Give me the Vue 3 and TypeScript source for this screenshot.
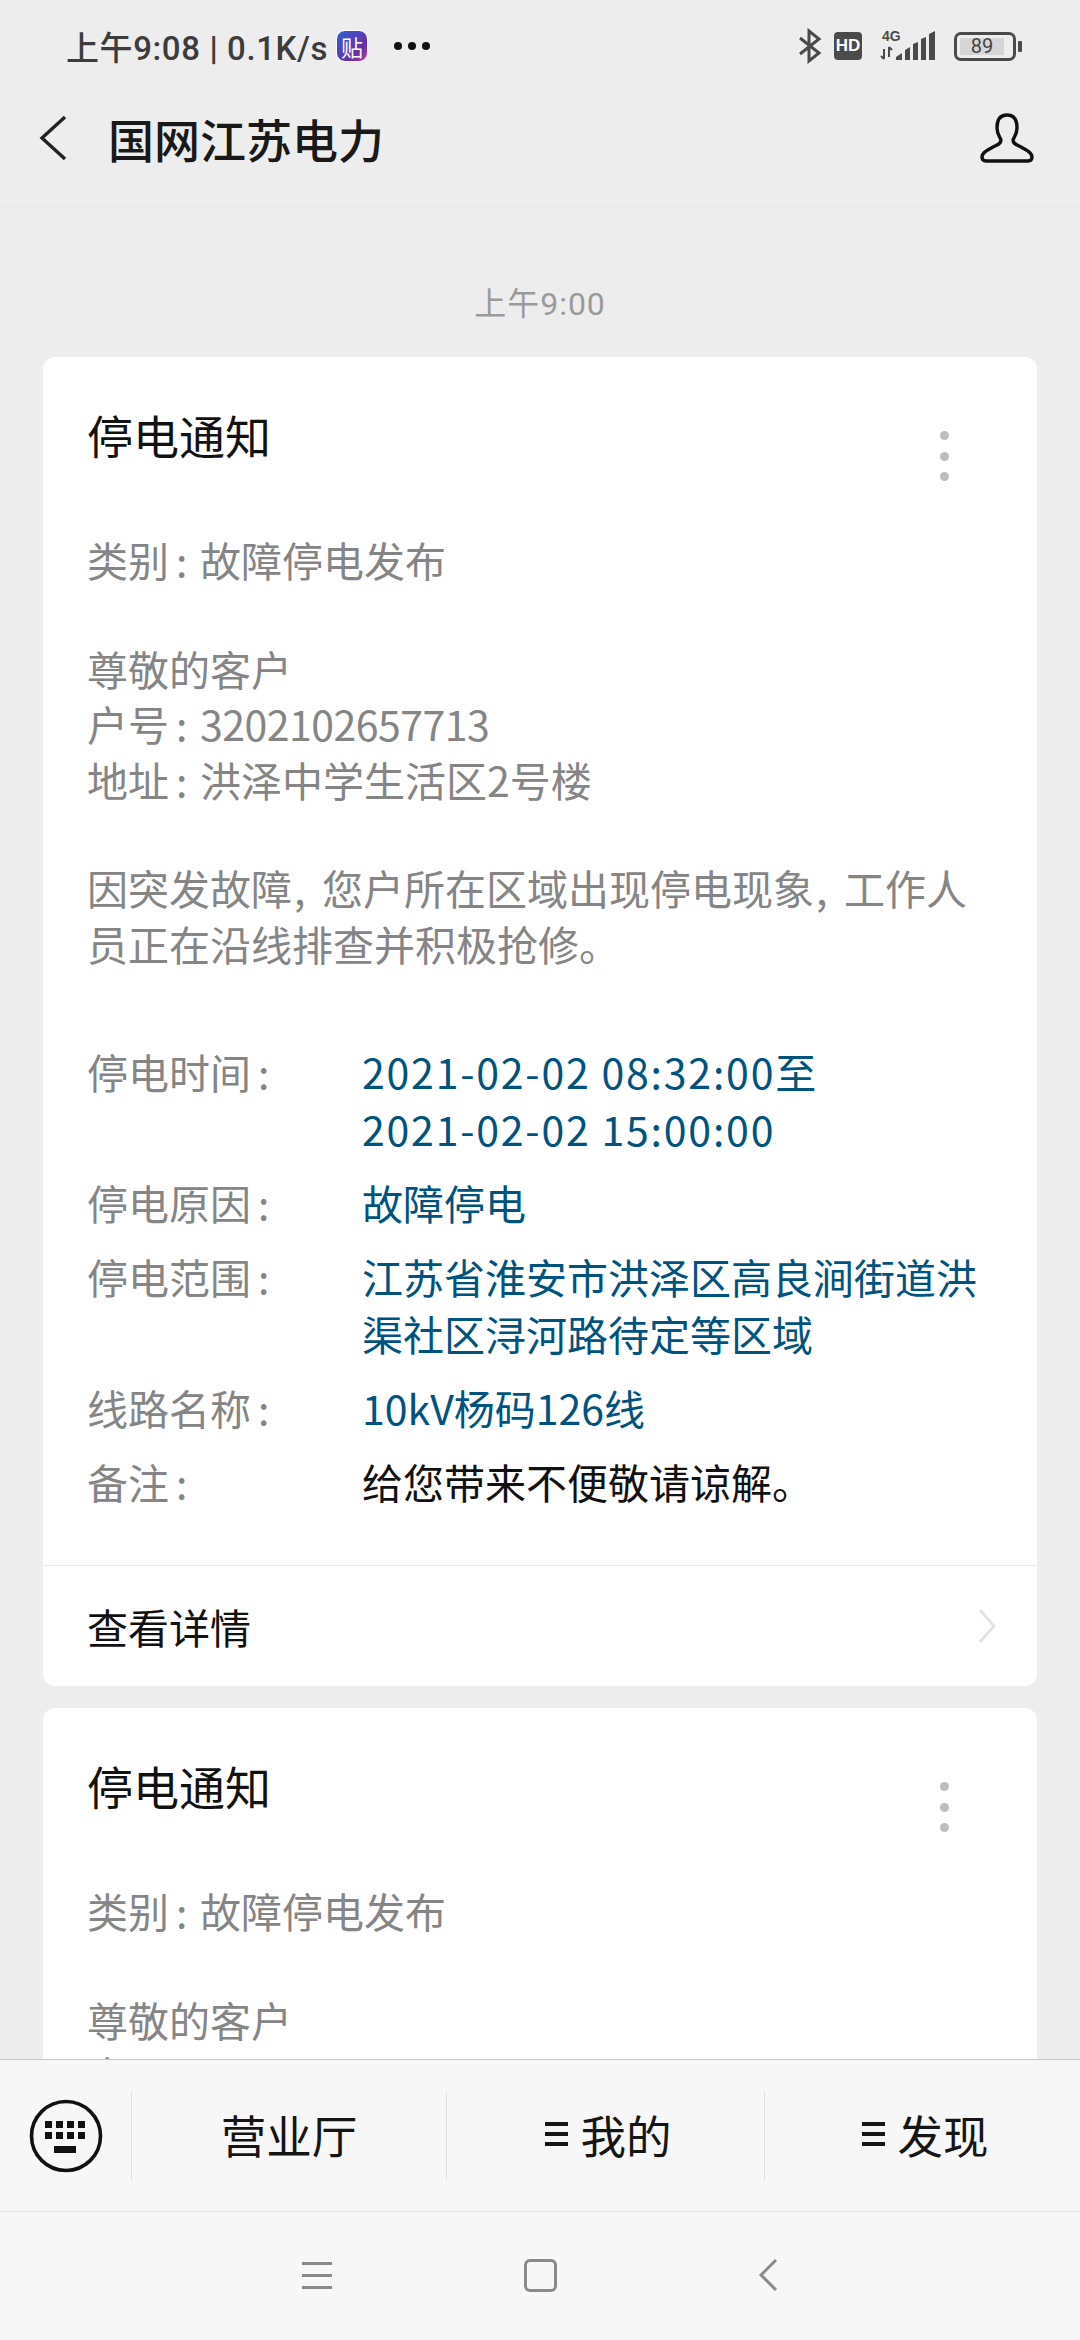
<script setup lang="ts">
interface Field {
  label: string
  lines: string[]
  plain?: boolean
  date?: boolean
}

const fields: Field[] = [
  { label: '停电时间', lines: ['2021-02-02 08:32:00至', '2021-02-02 15:00:00'], date: true },
  { label: '停电原因', lines: ['故障停电'] },
  { label: '停电范围', lines: ['江苏省淮安市洪泽区高良涧街道洪', '渠社区浔河路待定等区域'] },
  { label: '线路名称', lines: ['10kV杨码126线'] },
  { label: '备注', lines: ['给您带来不便敬请谅解。'], plain: true },
]
</script>

<template>
  <div class="phone">
    <header class="top">
      <div class="status">
        <div class="status-left">
          <span class="clock">上午9:08 <b>|</b> 0.1K/s</span>
          <span class="app-badge">贴</span>
          <span class="more-dots"><i></i><i></i><i></i></span>
        </div>
        <div class="status-right">
          <svg class="bt" width="24" height="36" viewBox="0 0 24 36" fill="none" stroke="#4a4a4a" stroke-width="3">
            <path d="M2 10 L21 25 L11 33 V3 L21 11 L2 26" />
          </svg>
          <span class="hd">HD</span>
          <svg class="signal" width="60" height="34" viewBox="0 0 60 34">
            <text x="4" y="12" font-size="14" font-weight="700" fill="#4a4a4a" font-family="'Liberation Sans', sans-serif">4G</text>
            <path d="M6 20v10M3 27l3 3M11 18v10M11 18l3 3" stroke="#4a4a4a" stroke-width="2" fill="none" />
            <path d="M18 31v-3l6-4v7zM27 31v-10l5-3v13zM35 31v-16l5-2v18zM43 31v-21l5-2v23zM51 31v-26l6-3v29z" fill="#4a4a4a" />
          </svg>
          <div class="battery">
            <div class="battery-body"><span class="battery-fill">89</span></div>
            <span class="battery-cap"></span>
          </div>
        </div>
      </div>
      <nav class="nav">
        <svg class="back" width="28" height="46" viewBox="0 0 28 46" fill="none" stroke="#222" stroke-width="3.4">
          <path d="M26 2 L3 23 L26 44" />
        </svg>
        <h1 class="nav-title">国网江苏电力</h1>
        <svg class="person" width="54" height="50" viewBox="0 0 54 50" fill="none" stroke="#111" stroke-width="3.4" stroke-linejoin="round">
          <path d="M27 2 C18 2 17 10 17 15 C17 21 20 24 21 27 C21 31 17 32 13 34 C8 37 2 39 2 44 C2 47 4 48 6 48 H48 C50 48 52 47 52 44 C52 39 46 37 41 34 C37 32 33 31 33 27 C34 24 37 21 37 15 C37 10 36 2 27 2 Z" />
        </svg>
      </nav>
    </header>

    <main class="feed">
      <div class="msg-time">上午9:00</div>

      <section class="card">
        <div class="card-head">
          <h2 class="card-title">停电通知</h2>
          <span class="card-menu"><i></i><i></i><i></i></span>
        </div>
        <div class="notice">
          <p>类别<span class="colon">:</span>故障停电发布</p>
          <p class="gap">尊敬的客户<br />户号<span class="colon">:</span><span class="num">3202102657713</span><br />地址<span class="colon">:</span>洪泽中学生活区2号楼</p>
          <p class="gap">因突发故障<span class="comma">,</span>您户所在区域出现停电现象<span class="comma">,</span>工作人员正在沿线排查并积极抢修。</p>
        </div>
        <dl class="fields">
          <div v-for="field in fields" :key="field.label" class="field">
            <dt>{{ field.label }}<span class="colon">:</span></dt>
            <dd :class="{ plain: field.plain, date: field.date }">
              <span v-for="line in field.lines" :key="line">{{ line }}</span>
            </dd>
          </div>
        </dl>
        <div class="detail">
          <span>查看详情</span>
          <svg width="18" height="36" viewBox="0 0 18 36" fill="none" stroke="#e2e2e2" stroke-width="3">
            <path d="M2 2 L16 18 L2 34" />
          </svg>
        </div>
      </section>

      <section class="card">
        <div class="card-head">
          <h2 class="card-title">停电通知</h2>
          <span class="card-menu"><i></i><i></i><i></i></span>
        </div>
        <div class="notice">
          <p>类别<span class="colon">:</span>故障停电发布</p>
          <p class="gap">尊敬的客户<br />户号<span class="colon">:</span><span class="num">3202102657713</span></p>
        </div>
      </section>
    </main>

    <footer class="bottom">
      <div class="menu">
        <div class="kbd-cell">
          <svg width="74" height="74" viewBox="0 0 74 74">
            <circle cx="37" cy="37" r="34.5" fill="none" stroke="#111" stroke-width="3.6" />
            <g fill="#111">
              <rect x="16" y="22" width="7" height="7" /><rect x="27" y="22" width="7" height="7" />
              <rect x="38" y="22" width="7" height="7" /><rect x="49" y="22" width="7" height="7" />
              <rect x="16" y="33" width="7" height="7" /><rect x="27" y="33" width="7" height="7" />
              <rect x="38" y="33" width="7" height="7" /><rect x="49" y="33" width="7" height="7" />
              <rect x="25" y="47" width="22" height="7" />
            </g>
          </svg>
        </div>
        <div class="menu-item">营业厅</div>
        <div class="menu-item shifted"><span class="bars"><i></i><i></i><i></i></span>我的</div>
        <div class="menu-item shifted"><span class="bars"><i></i><i></i><i></i></span>发现</div>
      </div>
      <div class="sys-nav">
        <span class="sys-lines"><i></i><i></i><i></i></span>
        <span class="sys-square"></span>
        <svg width="20" height="34" viewBox="0 0 20 34" fill="none" stroke="#8a8a8a" stroke-width="3">
          <path d="M18 2 L3 17 L18 32" />
        </svg>
      </div>
    </footer>
  </div>
</template>

<style scoped>
.phone {
  width: 1080px;
  height: 2340px;
  display: flex;
  flex-direction: column;
  overflow: hidden;
  background: #ededed;
  font-family: 'Noto Sans CJK SC', 'Noto Sans', sans-serif;
}

.top {
  flex: none;
  height: 207px;
  box-sizing: border-box;
  border-bottom: 1px solid #e9e9e9;
}

.status {
  height: 92px;
  box-sizing: border-box;
  padding: 0 58px 0 66px;
  display: flex;
  align-items: center;
  justify-content: space-between;
}

.status-left,
.status-right {
  display: flex;
  align-items: center;
}

.clock {
  font-size: 33px;
  font-weight: 500;
  letter-spacing: 0.6px;
  color: #3c3c3c;
  font-family: Roboto, 'Noto Sans CJK SC', sans-serif;
}

.clock b {
  font-weight: 700;
}

.app-badge {
  width: 30px;
  height: 30px;
  margin-left: 8px;
  border-radius: 9px;
  background: linear-gradient(135deg, #2f5fd0, #6a2fa8 70%, #c0398e);
  border: 1px solid #fff;
  color: #fff;
  font-size: 22px;
  line-height: 30px;
  text-align: center;
}

.more-dots {
  display: flex;
  gap: 6px;
  margin-left: 26px;
}

.more-dots i {
  width: 8px;
  height: 8px;
  border-radius: 50%;
  background: #111;
}

.bt {
  margin-right: 12px;
}

.hd {
  width: 28px;
  height: 28px;
  border-radius: 4px;
  background: #4a4a4a;
  color: #fff;
  font-size: 17px;
  font-weight: 700;
  line-height: 28px;
  text-align: center;
  font-family: 'Liberation Sans', sans-serif;
}

.signal {
  margin: 0 16px 0 16px;
}

.battery {
  display: flex;
  align-items: center;
  gap: 2px;
}

.battery-body {
  width: 62px;
  height: 29px;
  box-sizing: border-box;
  border: 3px solid #4a4a4a;
  border-radius: 7px;
  padding: 3px;
}

.battery-fill {
  display: block;
  height: 100%;
  width: 88%;
  background: #d6d6d6;
  color: #444;
  font-size: 20px;
  line-height: 17px;
  text-align: center;
  font-family: Roboto, sans-serif;
}

.battery-cap {
  width: 4px;
  height: 11px;
  border-radius: 1px;
  background: #4a4a4a;
}

.nav {
  height: 114px;
  padding: 0 46px 22px 39px;
  box-sizing: border-box;
  display: flex;
  align-items: center;
}

.nav-title {
  flex: 1;
  margin: 0 0 0 41px;
  font-size: 46px;
  font-weight: 500;
  color: #191919;
}

.feed {
  flex: 1;
  min-height: 0;
  overflow: hidden;
  padding: 0 43px;
}

.msg-time {
  margin-top: 73px;
  height: 48px;
  line-height: 48px;
  text-align: center;
  font-size: 32px;
  letter-spacing: 1px;
  color: #9a9a9a;
  font-family: Roboto, 'Noto Sans CJK SC', sans-serif;
}

.card {
  margin-top: 29px;
  background: #fff;
  border-radius: 12px;
  padding-top: 50px;
}

.card + .card {
  margin-top: 22px;
}

.card-head {
  position: relative;
  padding: 0 44px;
}

.card-title {
  margin: 0;
  font-size: 46px;
  font-weight: 400;
  line-height: 54px;
  color: #111;
}

.card-menu {
  position: absolute;
  right: 88px;
  top: 24px;
  display: flex;
  flex-direction: column;
  gap: 11.5px;
}

.card-menu i {
  width: 9px;
  height: 9px;
  border-radius: 50%;
  background: #bdbdbd;
}

.notice {
  padding: 71px 44px 0;
  font-size: 41px;
  line-height: 55.5px;
  color: #858585;
}

.notice p {
  margin: 0;
}

.notice .gap {
  margin-top: 53px;
}

.colon {
  display: inline-block;
  width: 31px;
  padding-left: 7px;
  box-sizing: border-box;
}

.comma {
  display: inline-block;
  width: 30px;
  padding-left: 2px;
  box-sizing: border-box;
}

.num {
  letter-spacing: -0.5px;
}

.fields {
  margin: 72px 0 0;
  padding: 0 44px 55px;
  font-size: 41px;
  line-height: 57px;
}

.field {
  display: flex;
  margin-top: 17px;
}

.field dt {
  flex: none;
  width: 275px;
  color: #858585;
}

.field dd {
  margin: 0;
  color: #00537f;
}

.field dd span {
  display: block;
}

.field dd.date {
  letter-spacing: 1.8px;
}

.field dd.plain {
  color: #111;
}

.detail {
  height: 120px;
  padding: 0 41px 0 44px;
  border-top: 1px solid #e8e8e8;
  display: flex;
  align-items: center;
  justify-content: space-between;
  font-size: 41px;
  color: #111;
}

.bottom {
  flex: none;
  height: 281px;
  background: #f7f7f7;
  border-top: 1px solid #c8c8c8;
  box-sizing: border-box;
}

.menu {
  height: 151px;
  border-bottom: 1px solid #e2e2e2;
  display: grid;
  grid-template-columns: 131px 315px 318px 1fr;
  align-items: center;
}

.kbd-cell {
  height: 88px;
  padding-left: 29px;
  box-sizing: border-box;
  display: flex;
  align-items: center;
}

.menu-item {
  height: 88px;
  box-sizing: border-box;
  padding-bottom: 4px;
  border-left: 1px solid #dedede;
  display: flex;
  align-items: center;
  justify-content: center;
  font-size: 45.5px;
  color: #151515;
}

.menu-item.shifted {
  padding-left: 6px;
}

.bars {
  display: flex;
  flex-direction: column;
  gap: 6px;
  margin-right: 12px;
}

.bars i {
  width: 23px;
  height: 4px;
  background: #151515;
}

.sys-nav {
  height: 128px;
  box-sizing: border-box;
  padding: 0 0 2px 302px;
  display: flex;
  align-items: center;
}

.sys-lines {
  display: flex;
  flex-direction: column;
  gap: 9px;
}

.sys-lines i {
  width: 30px;
  height: 3px;
  background: #8a8a8a;
}

.sys-square {
  width: 33px;
  height: 33px;
  box-sizing: border-box;
  margin-left: 192px;
  border: 3px solid #8a8a8a;
  border-radius: 6px;
}

.sys-nav svg {
  margin-left: 201px;
}
</style>
